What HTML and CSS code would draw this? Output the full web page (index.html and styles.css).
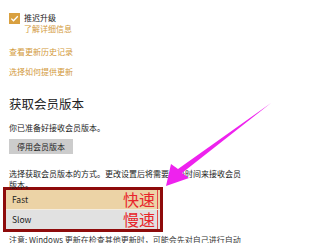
FILE: index.html
```html
<!DOCTYPE html>
<html lang="zh-CN">
<head>
    <meta charset="UTF-8">
    <title>Windows 更新 - 会员版本</title>
    <link rel="stylesheet" href="styles.css">
</head>
<body>
<div class="page">
    <div class="check-row">
        <span class="checkbox">
            <svg width="11" height="11" viewBox="0 0 11 11"><path d="M2.3 5.6 L4.5 7.8 L8.8 3.2" fill="none" stroke="#fff" stroke-width="1.3"/></svg>
        </span>
        <div>
            <div class="check-label">推迟升级</div>
            <a class="link">了解详细信息</a>
        </div>
    </div>

    <a class="link block first">查看更新历史记录</a>
    <a class="link block second">选择如何提供更新</a>

    <h2>获取会员版本</h2>
    <p class="ready">你已准备好接收会员版本。</p>
    <button class="stop-btn">停用会员版本</button>

    <p class="desc">选择获取会员版本的方式。更改设置后将需要一段时间来接收会员版本。</p>

    <div class="speed-box">
        <div class="speed fast"><span class="speed-name">Fast</span><span class="mark">快速</span></div>
        <div class="speed slow"><span class="speed-name">Slow</span><span class="mark">慢速</span></div>
    </div>

    <p class="note">注意: Windows 更新在检查其他更新时，可能会先对自己进行自动</p>
</div>

<!-- 标注箭头 -->
<svg class="arrow" width="326" height="243" viewBox="0 0 326 243">
    <polygon points="271,103 182,173 189,178 166,186 171,164 178,169" fill="#ee22ee"/>
</svg>
</body>
</html>
```

FILE: styles.css
```css
body {
    margin: 0;
    background: #fff;
    font-family: "Noto Sans CJK SC", "Noto Sans", sans-serif;
    color: #222;
    overflow: hidden;
}
.page {
    padding: 12px 0 0 9px;
    font-size: 8px;
    line-height: 11px;
}
.check-row {
    display: flex;
    gap: 4px;
}
.checkbox {
    width: 11px;
    height: 11px;
    margin-top: 1px;
    background: #d9a03f;
    display: flex;
}
.link {
    color: #d2993b;
}
.link.block {
    display: block;
}
.link.first {
    margin-top: 12px;
}
.link.second {
    margin-top: 9px;
}
h2 {
    margin: 19px 0 0;
    font-size: 12.5px;
    line-height: 16px;
    font-weight: normal;
}
.ready {
    margin: 10px 0 0;
}
.stop-btn {
    display: block;
    margin-top: 6px;
    height: 15px;
    padding: 0 8px;
    border: none;
    background: #cccccc;
    font-family: inherit;
    font-size: 8px;
    color: #222;
}
.desc {
    margin: 14px 0 0;
    width: 234px;
}
.speed-box {
    margin: -3px 0 0 -6px;
    width: 154px;
    border: 3px solid #8e0b0b;
}
.speed {
    display: flex;
    justify-content: space-between;
    padding: 0 2px 0 6px;
}
.fast {
    height: 19px;
    background: #ecd3a6;
    border-bottom: 1px solid #f3ece0;
}
.slow {
    height: 19px;
    background: #e1e1e1;
}
.speed-name {
    align-self: center;
    color: #222;
    font-size: 8.5px;
}
.mark {
    color: #e8262c;
    font-size: 16px;
    line-height: 19px;
    border-right: 1px solid #e54848;
    padding-right: 2px;
}
.note {
    margin: 2px 0 0;
    white-space: nowrap;
    color: #333;
}
.arrow {
    position: absolute;
    left: 0;
    top: 0;
    pointer-events: none;
}
```
